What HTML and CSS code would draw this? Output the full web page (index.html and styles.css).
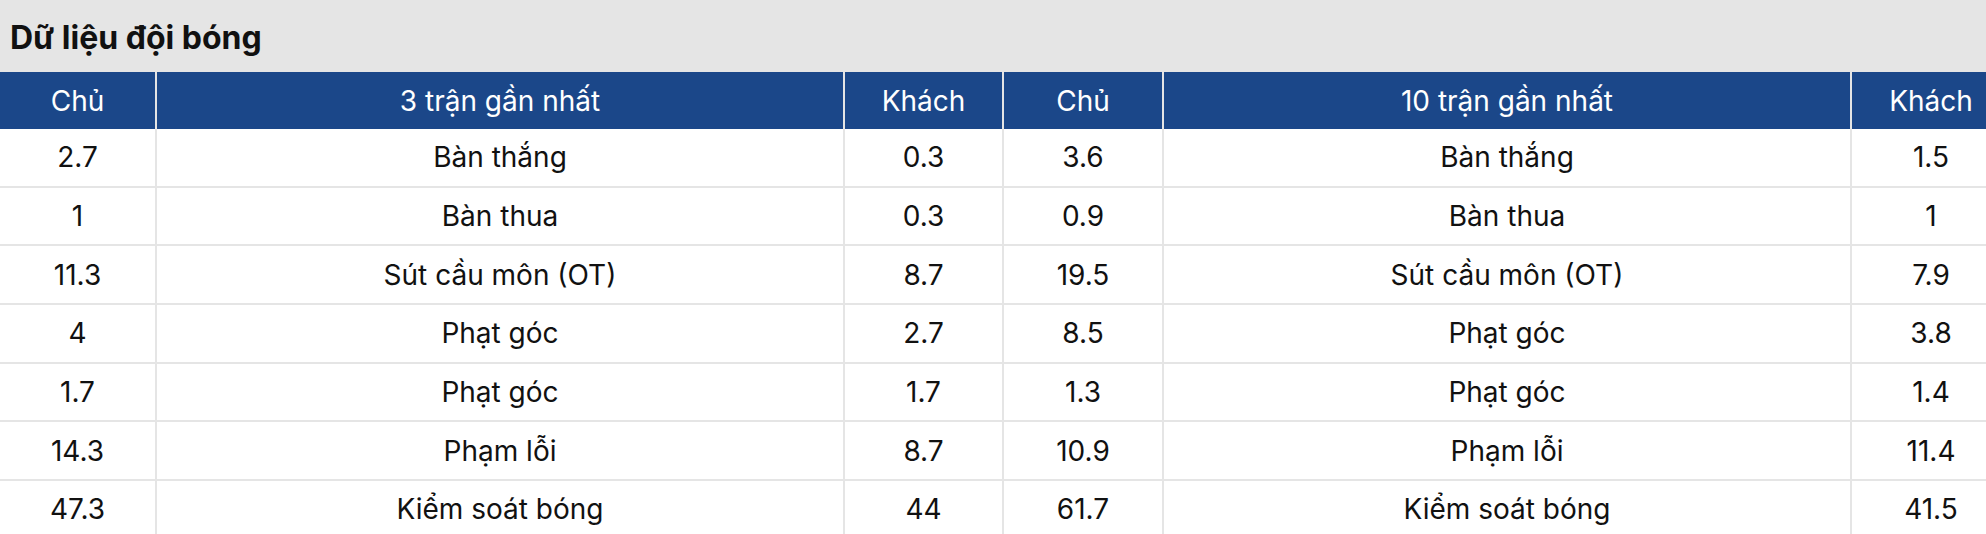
FILE: index.html
```html
<!DOCTYPE html>
<html lang="vi">
<head>
<meta charset="utf-8">
<title>Dữ liệu đội bóng</title>
<link rel="stylesheet" href="styles.css">
</head>
<body>
<section class="panel">
  <h2 class="panel-title">Dữ liệu đội bóng</h2>
  <table class="stats">
    <colgroup>
      <col class="c-narrow1"><col class="c-wide"><col class="c-narrow2"><col class="c-narrow3"><col class="c-wide"><col class="c-narrow4">
    </colgroup>
    <thead>
      <tr><th>Chủ</th><th>3 trận gần nhất</th><th>Khách</th><th>Chủ</th><th>10 trận gần nhất</th><th>Khách</th></tr>
    </thead>
    <tbody>
      <tr><td>2.7</td><td>Bàn thắng</td><td>0.3</td><td>3.6</td><td>Bàn thắng</td><td>1.5</td></tr>
      <tr><td>1</td><td>Bàn thua</td><td>0.3</td><td>0.9</td><td>Bàn thua</td><td>1</td></tr>
      <tr><td>11.3</td><td>Sút cầu môn (OT)</td><td>8.7</td><td>19.5</td><td>Sút cầu môn (OT)</td><td>7.9</td></tr>
      <tr><td>4</td><td>Phạt góc</td><td>2.7</td><td>8.5</td><td>Phạt góc</td><td>3.8</td></tr>
      <tr><td>1.7</td><td>Phạt góc</td><td>1.7</td><td>1.3</td><td>Phạt góc</td><td>1.4</td></tr>
      <tr><td>14.3</td><td>Phạm lỗi</td><td>8.7</td><td>10.9</td><td>Phạm lỗi</td><td>11.4</td></tr>
      <tr><td>47.3</td><td>Kiểm soát bóng</td><td>44</td><td>61.7</td><td>Kiểm soát bóng</td><td>41.5</td></tr>
    </tbody>
  </table>
</section>
</body>
</html>
```

FILE: styles.css
```css
html, body {
  margin: 0;
  padding: 0;
  background: #ffffff;
  overflow: hidden;
}
body {
  font-family: Inter, "Noto Sans", "Liberation Sans", sans-serif;
  color: #111111;
}
.panel {
  width: 2010px;
}
.panel-title {
  margin: 0;
  height: 72px;
  box-sizing: border-box;
  padding: 2px 10px 0;
  display: flex;
  align-items: center;
  background: #e5e5e5;
  font-size: 32px;
  font-weight: 700;
  color: #111111;
}
.stats {
  width: 2010px;
  table-layout: fixed;
  border-collapse: separate;
  border-spacing: 0;
}
.c-narrow1 { width: 157px; }
.c-wide { width: 688px; }
.c-narrow2 { width: 159px; }
.c-narrow3 { width: 160px; }
.c-narrow4 { width: 158px; }
.stats th {
  height: 57px;
  padding: 0;
  background: #1b4789;
  color: #ffffff;
  font-weight: 400;
  font-size: 28px;
  text-align: center;
  border-right: 2px solid #e5e5e5;
}
.stats th:last-child,
.stats td:last-child {
  border-right: none;
}
.stats td {
  height: 56.7px;
  padding: 0;
  text-align: center;
  font-size: 28px;
  color: #111111;
  border-right: 2px solid #e5e5e5;
  border-bottom: 2px solid #e5e5e5;
}
```
